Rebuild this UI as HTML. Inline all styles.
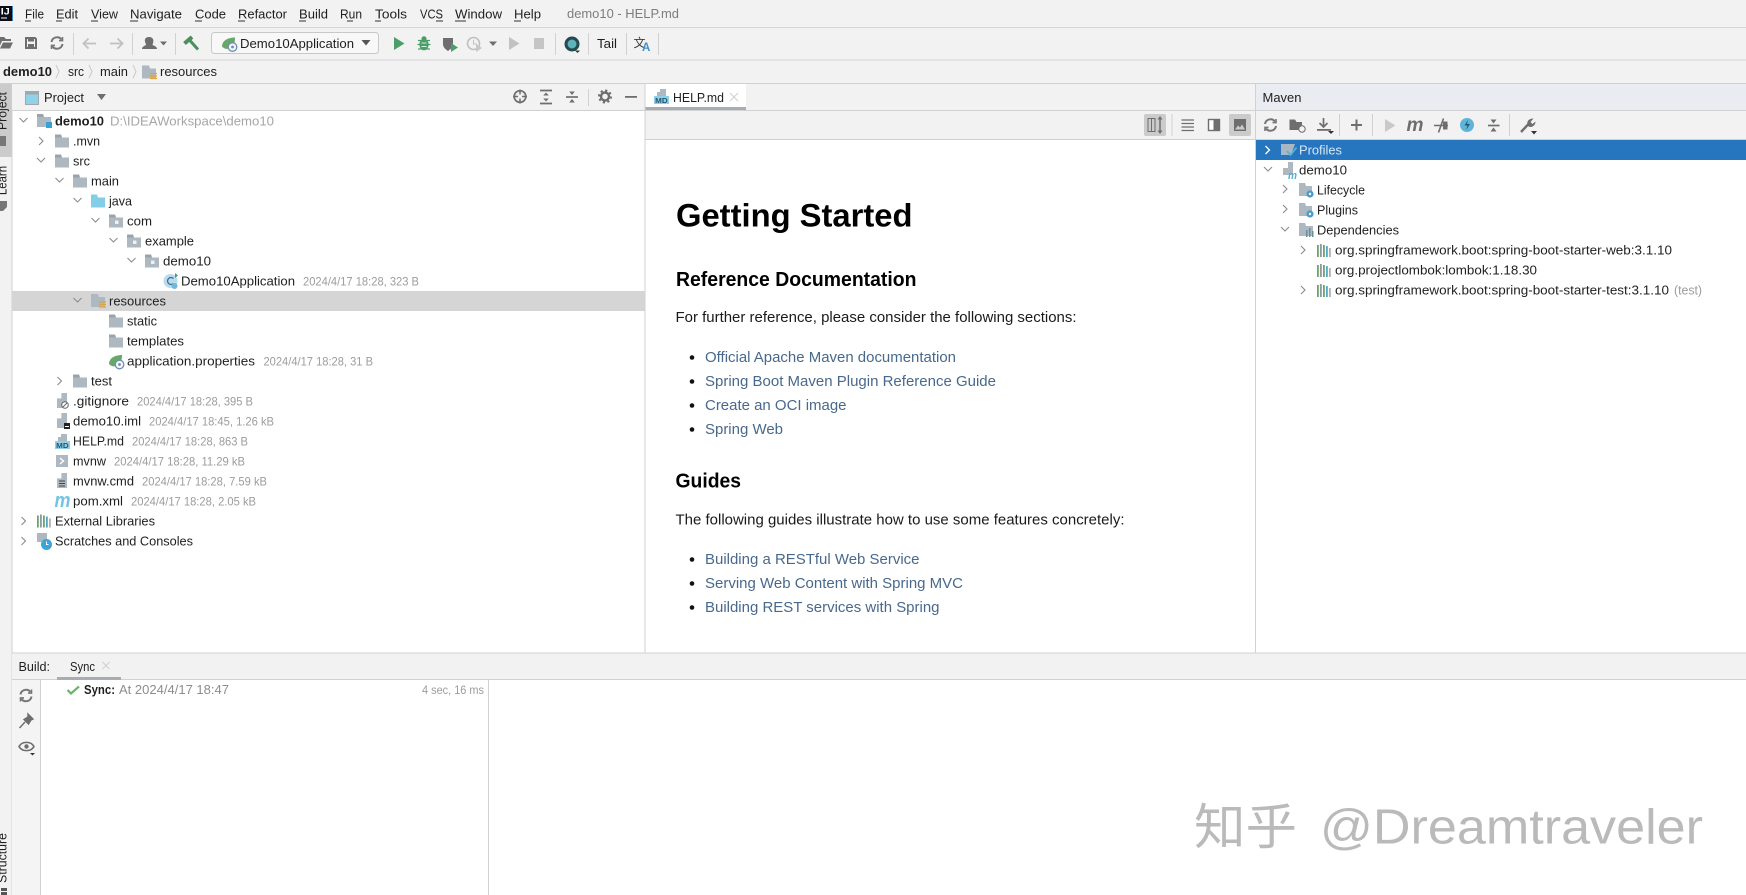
<!DOCTYPE html>
<html lang="en"><head><meta charset="utf-8"><title>demo10 - HELP.md</title>
<style>
html,body{margin:0;padding:0;background:#fff;width:1746px;height:895px;overflow:hidden}
svg{display:block}
text{font-family:"Liberation Sans","Noto Sans CJK SC",sans-serif;font-size:13px;fill:#1f1f1f;white-space:pre}
.g{fill:#9c9c9c;font-size:12px}
.h1{font-size:32px;font-weight:700;fill:#000}
.h2{font-size:20px;font-weight:700;fill:#000}
.p{font-size:14.5px;fill:#1a1a1a}
.a{font-size:14.5px;fill:#48698c}
.m{fill:#1e1e1e;font-size:13px}
.wm{font-size:49px;fill:#bababa}
</style></head><body>
<svg width="1746" height="895" viewBox="0 0 1746 895" xmlns="http://www.w3.org/2000/svg">
<defs>
<path id="cr" d="M-2-4L2 0L-2 4" fill="none" stroke="#8c8c8c" stroke-width="1.100"/>
<path id="cd" d="M-4-2L0 2L4-2" fill="none" stroke="#8c8c8c" stroke-width="1.100"/>
<g id="f"><path d="M0 0H6L7 3H14V13H0Z" fill="#aeb8c0"/><path d="M0 0H6L7 3H0Z" fill="#98a3ab"/></g>
<g id="pk"><use href="#f"/><rect x="6" y="6" width="3.5" height="3.5" fill="#eef1f3"/></g>
<g id="j"><path d="M0 0H6L7 3H14V13H0Z" fill="#84cde9"/></g>
<g id="res"><path d="M0 0H7L8 3H14V13H0Z" fill="#aeb8c0"/><path d="M8 8h7M8 10.5h7M8 13h7" stroke="#e0a33e" stroke-width="1.3"/></g>
<g id="file"><path d="M4 0H10V15H0V5H4Z" fill="#aeb8c0"/><path d="M4 0V5H0" fill="none" stroke="#fff" stroke-width=".8"/></g>
<g id="sp"><path d="M0 10C0 4 6 1 13 1C13 6 12 10 7 12C4 13 2 12 0 10Z" fill="#66a868"/><circle cx="10.5" cy="10.5" r="4.3" fill="#f4f7fa" stroke="#6c8fae" stroke-width="1.3"/><circle cx="10.5" cy="10.5" r="1.4" fill="#6c8fae"/></g>
<g id="lib"><rect x="0" y="1" width="1.8" height="12" fill="#6ca56c"/><rect x="3" y="0" width="1.8" height="13" fill="#8d9aa0"/><rect x="6" y="1" width="1.8" height="12" fill="#6ca56c"/><rect x="9" y="2" width="1.8" height="11" fill="#5aa7c5"/><rect x="12" y="4" width="1.8" height="9" fill="#a9b2b8"/></g>
<g id="mavf"><path d="M0 0H6L7 3H13V13H0Z" fill="#aeb8c0"/><circle cx="11" cy="11" r="3.6" fill="#4a9cc9"/><circle cx="11" cy="11" r="1.2" fill="#fff"/></g>
<g id="sync" fill="none" stroke="#767676" stroke-width="2"><path d="M-5.5 -1A5.6 5.6 0 0 1 4.5 -3.5"/><path d="M5.5 1A5.6 5.6 0 0 1 -4.5 3.5"/><path d="M5.5-6V-2.4H2" stroke-width="1.6"/><path d="M-5.5 6V2.4H-2" stroke-width="1.6"/></g>
<g id="md"><path d="M6 0H12V7H6Z" fill="#aeb8c0"/><path d="M3 3H6V7H3Z" fill="#aeb8c0"/><rect x="0" y="7" width="15" height="8" fill="#8fcfe7"/><text x="1.2" y="14" style="font-size:7px;font-weight:700;fill:#22586f" textLength="12.5" lengthAdjust="spacingAndGlyphs">MD</text></g>
</defs>

<rect width="1746" height="895" fill="#fff"/>
<!-- chrome -->
<rect width="1746" height="83" fill="#f2f2f2"/>
<rect y="27" width="1746" height="1" fill="#d6d6d6"/>
<rect y="59.500" width="1746" height="1" fill="#d1d1d1"/>
<rect y="83" width="1746" height="1" fill="#d1d1d1"/>

<!-- menu -->
<rect x="0" y="6" width="12.500" height="15" fill="#0b0d18"/><rect x="12" y="6" width="1" height="15" fill="#3f83bf"/>
<text x="0.800" y="14.500" style="font-size:9px;font-weight:700;fill:#fff" textLength="9" lengthAdjust="spacingAndGlyphs">IJ</text>
<rect x="1" y="17.500" width="6" height="1" fill="#fff"/>
<g class="menu">
<text class="m" x="25" y="18.500" textLength="19" lengthAdjust="spacingAndGlyphs">File</text>
<text class="m" x="56" y="18.500" textLength="22" lengthAdjust="spacingAndGlyphs">Edit</text>
<text class="m" x="91" y="18.500" textLength="27" lengthAdjust="spacingAndGlyphs">View</text>
<text class="m" x="130" y="18.500" textLength="52" lengthAdjust="spacingAndGlyphs">Navigate</text>
<text class="m" x="195" y="18.500" textLength="31" lengthAdjust="spacingAndGlyphs">Code</text>
<text class="m" x="238" y="18.500" textLength="49" lengthAdjust="spacingAndGlyphs">Refactor</text>
<text class="m" x="299" y="18.500" textLength="29" lengthAdjust="spacingAndGlyphs">Build</text>
<text class="m" x="340" y="18.500" textLength="22" lengthAdjust="spacingAndGlyphs">Run</text>
<text class="m" x="375" y="18.500" textLength="32" lengthAdjust="spacingAndGlyphs">Tools</text>
<text class="m" x="420" y="18.500" textLength="23" lengthAdjust="spacingAndGlyphs">VCS</text>
<text class="m" x="455" y="18.500" textLength="47" lengthAdjust="spacingAndGlyphs">Window</text>
<text class="m" x="514" y="18.500" textLength="27" lengthAdjust="spacingAndGlyphs">Help</text>
</g>
<g fill="#333"><rect x="25" y="20.500" width="6" height="1"/><rect x="56" y="20.500" width="6" height="1"/><rect x="91" y="20.500" width="7" height="1"/><rect x="130" y="20.500" width="8" height="1"/><rect x="195" y="20.500" width="7" height="1"/><rect x="238" y="20.500" width="7" height="1"/><rect x="299" y="20.500" width="7" height="1"/><rect x="347" y="20.500" width="6" height="1"/><rect x="375" y="20.500" width="6" height="1"/><rect x="436" y="20.500" width="7" height="1"/><rect x="455" y="20.500" width="11" height="1"/><rect x="514" y="20.500" width="7" height="1"/></g>
<text x="567" y="18" style="fill:#7d7d7d" textLength="112" lengthAdjust="spacingAndGlyphs">demo10 - HELP.md</text>

<!-- toolbar -->
<path d="M-2 37h6l2 2h5v2H2l-3 7H-2z" fill="#6e6e6e"/><path d="M3 42.500h10L10 48.500H0z" fill="#6e6e6e"/>
<path d="M26 38H35L36 39V48H26Z" fill="none" stroke="#6e6e6e" stroke-width="2"/><rect x="28" y="38" width="6" height="3.500" fill="#6e6e6e"/><rect x="28" y="44" width="6" height="4" fill="#6e6e6e"/>
<use href="#sync" x="57" y="43"/>
<rect x="73" y="33" width="1" height="22" fill="#d1d1d1"/>
<path d="M83.500 43.500H96M88.500 38.500L83.500 43.500L88.500 48.500" fill="none" stroke="#c0c0c0" stroke-width="1.800"/>
<path d="M110 43.500H122.500M117.500 38.500L122.500 43.500L117.500 48.500" fill="none" stroke="#c0c0c0" stroke-width="1.800"/>
<rect x="132" y="33" width="1" height="22" fill="#d1d1d1"/>
<path d="M149 37C153 37 154 40 153 43L152.500 45C155 46 157 47 157 49H142C142 47 144 46 146 45L145.500 43C144 40 145 37 149 37Z" fill="#6e6e6e"/>
<path d="M160 41.500h7l-3.500 4z" fill="#6e6e6e"/>
<rect x="175" y="33" width="1" height="22" fill="#d1d1d1"/>
<path d="M184.500 43.500L192 37" stroke="#4b8f5f" stroke-width="4" fill="none"/><path d="M189.500 40L198 49.500" stroke="#4b8f5f" stroke-width="3" fill="none"/>
<rect x="211.500" y="32.500" width="167" height="21" rx="3" fill="#f8f8f8" stroke="#c8c8c8"/>
<use href="#sp" x="222" y="36.500"/>
<text x="240" y="48" style="font-size:13px" textLength="114" lengthAdjust="spacingAndGlyphs">Demo10Application</text>
<path d="M361.500 40h9l-4.500 5.500z" fill="#555"/>
<path d="M394 37L404.500 43.500L394 50Z" fill="#4c9e68"/>
<path d="M418 40.500H430M417.500 44.500H430.500M418 49H430" stroke="#4c9e68" stroke-width="1.300"/>
<g fill="#4c9e68"><ellipse cx="424" cy="44.500" rx="4.700" ry="5.800"/><circle cx="424" cy="38.800" r="2.500"/></g>
<path d="M421.500 43H426.500M421.500 46.500H426.500" stroke="#d7e8dc" stroke-width="1"/>
<path d="M443 38H453V47L448 51C445 49 443 47 443 44Z" fill="#6e6e6e"/><path d="M451 43L458 47.500L451 52Z" fill="#4c9e68"/>
<circle cx="473.500" cy="43.500" r="6" fill="none" stroke="#c0c0c0" stroke-width="1.600"/><path d="M473.500 40V44H477" fill="none" stroke="#c0c0c0"/><path d="M476 44L482 48L476 52Z" fill="#c7c7c7"/>
<path d="M489 41.500h8l-4 4.500z" fill="#6e6e6e"/>
<path d="M509 37L519.500 43.500L509 50Z" fill="#c2c2c2"/>
<rect x="534" y="38" width="10" height="11" fill="#c5c5c5"/>
<rect x="555" y="33" width="1" height="22" fill="#d1d1d1"/>
<circle cx="572" cy="44" r="6" fill="#5fb3bc" stroke="#24494e" stroke-width="3"/><path d="M575 50.500h5l-2.500 2.500z" fill="#333"/>
<rect x="588" y="33" width="1" height="22" fill="#d1d1d1"/>
<text x="597" y="48" style="font-size:13px" textLength="20" lengthAdjust="spacingAndGlyphs">Tail</text>
<rect x="626" y="33" width="1" height="22" fill="#d1d1d1"/>
<text x="633.500" y="47" style="font-size:12px;fill:#3c3c3c">文</text>
<text x="642" y="51" style="font-size:11.500px;font-weight:700;fill:#3f8fd0">A</text>
<rect x="658" y="33" width="1" height="22" fill="#d1d1d1"/>

<!-- breadcrumb -->
<text x="3" y="76" style="font-weight:700;font-size:13px" textLength="49" lengthAdjust="spacingAndGlyphs">demo10</text>
<path d="M56 65l3 6.500l-3 6.500" fill="none" stroke="#c9c9c9"/>
<text x="68" y="76" textLength="16" lengthAdjust="spacingAndGlyphs">src</text>
<path d="M89 65l3 6.500l-3 6.500" fill="none" stroke="#c9c9c9"/>
<text x="100" y="76" textLength="28" lengthAdjust="spacingAndGlyphs">main</text>
<path d="M133 65l3 6.500l-3 6.500" fill="none" stroke="#c9c9c9"/>
<use href="#res" x="142" y="65.500"/>
<text x="160" y="76" textLength="57" lengthAdjust="spacingAndGlyphs">resources</text>

<!-- left strip -->
<rect y="84" width="11.500" height="811" fill="#f2f2f2"/>
<rect y="84" width="11.500" height="73" fill="#cbcbcb"/>
<rect x="11.500" y="84" width="1" height="811" fill="#d1d1d1"/>
<text transform="translate(6.500,130) rotate(-90)" textLength="38" lengthAdjust="spacingAndGlyphs" style="font-size:13px">Project</text>
<path d="M0 136H6V146H0Z" fill="#777"/>
<text transform="translate(6.500,195) rotate(-90)" textLength="29" lengthAdjust="spacingAndGlyphs" style="font-size:13px">Learn</text>
<path d="M0 201H7V207L3 211H0Z" fill="#777"/>
<text transform="translate(6.500,883) rotate(-90)" textLength="50" lengthAdjust="spacingAndGlyphs" style="font-size:13px">Structure</text>
<path d="M1 888H7V891H1ZM1 892H7V895H1Z" fill="#555"/>

<!-- project header -->
<rect x="12" y="84" width="633" height="26" fill="#f2f2f2"/>
<rect x="12" y="110" width="633" height="1" fill="#d1d1d1"/>
<rect x="25.500" y="91.500" width="13" height="13" fill="#8fd2ea" stroke="#a0a8ae"/><rect x="25.500" y="91.500" width="13" height="3" fill="#a0a8ae"/>
<text x="44" y="102" textLength="40" lengthAdjust="spacingAndGlyphs">Project</text>
<path d="M97 94h9l-4.500 6z" fill="#6e6e6e"/>
<circle cx="520" cy="96.500" r="5.800" fill="none" stroke="#6e6e6e" stroke-width="1.700"/><path d="M520 89.500v5M520 98.500v5M513 96.500h5M522 96.500h5" stroke="#6e6e6e" stroke-width="1.500"/>
<path d="M540 90.500h12M540 103.500h12" stroke="#6e6e6e" stroke-width="1.700"/><path d="M546 92.500l-2.800 3h5.600zM546 101.500l-2.800-3h5.600z" fill="#6e6e6e"/>
<path d="M566 97h12" stroke="#6e6e6e" stroke-width="1.700"/><path d="M572 95l-2.800-3.500h5.600zM572 99l-2.800 3.500h5.600z" fill="#6e6e6e"/>
<rect x="588" y="89" width="1" height="17" fill="#d1d1d1"/>
<circle cx="605" cy="96.500" r="4" fill="none" stroke="#6e6e6e" stroke-width="2.400"/><circle cx="605" cy="96.500" r="6" fill="none" stroke="#6e6e6e" stroke-width="2" stroke-dasharray="2.200 2.500"/>
<rect x="625" y="96" width="12" height="1.800" fill="#6e6e6e"/>

<!-- project tree -->
<rect x="12" y="291" width="633" height="20" fill="#d5d5d5"/>
<use href="#cd" x="23.500" y="120"/>
<use href="#f" x="37" y="114"/><rect x="46" y="122" width="6" height="6" fill="#36a3d4"/>
<text x="55" y="125.500" style="font-weight:700" textLength="49" lengthAdjust="spacingAndGlyphs">demo10</text>
<text class="g" x="110" y="125.500" style="font-size:12.500px;fill:#a6a6a6" textLength="164" lengthAdjust="spacingAndGlyphs">D:\IDEAWorkspace\demo10</text>

<use href="#cr" x="41" y="141"/><use href="#f" x="55" y="134.500"/>
<text x="73" y="145.500" textLength="27" lengthAdjust="spacingAndGlyphs">.mvn</text>
<use href="#cd" x="41" y="160"/><use href="#f" x="55" y="154.500"/>
<text x="73" y="165.500" textLength="17" lengthAdjust="spacingAndGlyphs">src</text>
<use href="#cd" x="59.500" y="180"/><use href="#f" x="73" y="174.500"/>
<text x="91" y="185.500" textLength="28" lengthAdjust="spacingAndGlyphs">main</text>
<use href="#cd" x="77.500" y="200"/><use href="#j" x="91" y="194.500"/>
<text x="109" y="205.500" textLength="23" lengthAdjust="spacingAndGlyphs">java</text>
<use href="#cd" x="95.500" y="220"/><use href="#pk" x="109" y="214.500"/>
<text x="127" y="225.500" textLength="25" lengthAdjust="spacingAndGlyphs">com</text>
<use href="#cd" x="113.500" y="240"/><use href="#pk" x="127" y="234.500"/>
<text x="145" y="245.500" textLength="49" lengthAdjust="spacingAndGlyphs">example</text>
<use href="#cd" x="131.500" y="260"/><use href="#pk" x="145" y="254.500"/>
<text x="163" y="265.500" textLength="48" lengthAdjust="spacingAndGlyphs">demo10</text>
<circle cx="170.500" cy="281" r="7" fill="#b8dcee"/><path d="M173.500 278.500A3.500 3.500 0 1 0 173.500 283.500" fill="none" stroke="#3f6f8c" stroke-width="1.300"/><path d="M175 273l3 2.500-3 2.500z" fill="#4c9e68"/><circle cx="174.500" cy="286" r="3" fill="#6fb7dc"/>
<text x="181" y="285.500" textLength="114" lengthAdjust="spacingAndGlyphs">Demo10Application</text>
<text class="g" x="303" y="285.500" textLength="116" lengthAdjust="spacingAndGlyphs">2024/4/17 18:28, 323 B</text>

<use href="#cd" x="77.500" y="300"/><use href="#res" x="91" y="294"/>
<text x="109" y="305.500" textLength="57" lengthAdjust="spacingAndGlyphs">resources</text>
<use href="#f" x="109" y="314.500"/><text x="127" y="325.500" textLength="30" lengthAdjust="spacingAndGlyphs">static</text>
<use href="#f" x="109" y="334.500"/><text x="127" y="345.500" textLength="57" lengthAdjust="spacingAndGlyphs">templates</text>
<use href="#sp" x="109" y="354"/><text x="127" y="365.500" textLength="128" lengthAdjust="spacingAndGlyphs">application.properties</text>
<text class="g" x="263.500" y="365.500" textLength="109.500" lengthAdjust="spacingAndGlyphs">2024/4/17 18:28, 31 B</text>
<use href="#cr" x="59.500" y="381"/><use href="#f" x="73" y="374.500"/>
<text x="91" y="385.500" textLength="21" lengthAdjust="spacingAndGlyphs">test</text>

<use href="#file" x="57" y="393"/><circle cx="65" cy="405" r="3.300" fill="#fff" stroke="#666"/><path d="M63 407l4-4" stroke="#666"/>
<text x="73" y="405.500" textLength="56" lengthAdjust="spacingAndGlyphs">.gitignore</text>
<text class="g" x="137" y="405.500" textLength="116" lengthAdjust="spacingAndGlyphs">2024/4/17 18:28, 395 B</text>
<use href="#file" x="57" y="413"/><rect x="64" y="423" width="6" height="6" fill="#222"/><rect x="65" y="426" width="4" height="1" fill="#fff"/>
<text x="73" y="425.500" textLength="68" lengthAdjust="spacingAndGlyphs">demo10.iml</text>
<text class="g" x="149" y="425.500" textLength="125" lengthAdjust="spacingAndGlyphs">2024/4/17 18:45, 1.26 kB</text>
<use href="#md" x="55" y="434"/>
<text x="73" y="445.500" textLength="51" lengthAdjust="spacingAndGlyphs">HELP.md</text>
<text class="g" x="132" y="445.500" textLength="116" lengthAdjust="spacingAndGlyphs">2024/4/17 18:28, 863 B</text>
<rect x="56" y="455" width="12" height="12" fill="#aeb8c0"/><path d="M60 458l3.500 3-3.500 3" fill="none" stroke="#fff" stroke-width="1.400"/>
<text x="73" y="465.500" textLength="33" lengthAdjust="spacingAndGlyphs">mvnw</text>
<text class="g" x="114" y="465.500" textLength="131" lengthAdjust="spacingAndGlyphs">2024/4/17 18:28, 11.29 kB</text>
<use href="#file" x="57" y="473"/><path d="M59 481h6M59 483.500h6M59 486h6" stroke="#444" stroke-width="1"/>
<text x="73" y="485.500" textLength="61" lengthAdjust="spacingAndGlyphs">mvnw.cmd</text>
<text class="g" x="142" y="485.500" textLength="125" lengthAdjust="spacingAndGlyphs">2024/4/17 18:28, 7.59 kB</text>
<text x="54.500" y="507" style="font-size:20px;font-style:italic;font-weight:700;fill:#72c4e4" textLength="16" lengthAdjust="spacingAndGlyphs">m</text>
<text x="73" y="505.500" textLength="50" lengthAdjust="spacingAndGlyphs">pom.xml</text>
<text class="g" x="131" y="505.500" textLength="125" lengthAdjust="spacingAndGlyphs">2024/4/17 18:28, 2.05 kB</text>
<use href="#cr" x="23.500" y="521"/><use href="#lib" x="37" y="514.500"/>
<text x="55" y="525.500" textLength="100" lengthAdjust="spacingAndGlyphs">External Libraries</text>
<use href="#cr" x="23.500" y="541"/><path d="M37 533h10v9H37Z" fill="#aeb8c0"/><circle cx="46.500" cy="544.500" r="5.500" fill="#3ba4d8"/><path d="M46.500 541.500v3h2" stroke="#fff" fill="none"/>
<text x="55" y="545.500" textLength="138" lengthAdjust="spacingAndGlyphs">Scratches and Consoles</text>

<!-- borders -->
<rect x="644.500" y="84" width="1" height="569" fill="#d1d1d1"/>
<rect x="1255" y="84" width="1" height="569" fill="#d1d1d1"/>

<!-- editor -->
<rect x="645.500" y="84" width="609.500" height="26" fill="#f2f2f2"/>
<rect x="645.500" y="84" width="100.500" height="23" fill="#fff"/>
<rect x="645.500" y="107" width="100.500" height="3" fill="#a8adb3"/>
<use href="#md" x="654" y="89"/>
<text x="673" y="102" textLength="51" lengthAdjust="spacingAndGlyphs">HELP.md</text>
<path d="M730 93l8 8M738 93l-8 8" stroke="#d0d0d0" stroke-width="1.100"/>
<rect x="645.500" y="110" width="609.500" height="29" fill="#f2f2f2"/>
<rect x="645.500" y="110" width="609.500" height="1" fill="#d1d1d1"/>
<rect x="645.500" y="139" width="609.500" height="1" fill="#d1d1d1"/>
<rect x="1144" y="114" width="22" height="22" rx="2" fill="#cbcbcb"/>
<path d="M1148 118.500h7v13h-7zM1151.500 118.500v13" fill="none" stroke="#6e6e6e"/><path d="M1160 117v16" stroke="#6e6e6e" stroke-width="1.500"/><path d="M1160 116l-2.500 3.500h5zM1160 134l-2.500-3.500h5z" fill="#6e6e6e"/>
<rect x="1171.500" y="114" width="1" height="22" fill="#d1d1d1"/>
<path d="M1181.500 120h12.500M1181.500 123.500h12.500M1181.500 127h12.500M1181.500 130.500h12.500" stroke="#6e6e6e" stroke-width="1.300"/>
<rect x="1208.500" y="119.500" width="11" height="11" fill="#fff" stroke="#6e6e6e" stroke-width="1.400"/><rect x="1213.500" y="119.500" width="6" height="11" fill="#6e6e6e"/>
<rect x="1229" y="114" width="22" height="22" rx="2" fill="#cbcbcb"/>
<rect x="1234" y="119" width="12" height="12" fill="#6e6e6e"/><path d="M1235 129.500l3-4 2 2 2-3 3 5z" fill="#cbcbcb"/>

<text class="h1" x="676" y="226.500" textLength="236.500" lengthAdjust="spacingAndGlyphs">Getting Started</text>
<text class="h2" x="676" y="286" textLength="240.500" lengthAdjust="spacingAndGlyphs">Reference Documentation</text>
<text class="p" x="675.500" y="322" textLength="401" lengthAdjust="spacingAndGlyphs">For further reference, please consider the following sections:</text>
<circle cx="692" cy="357.500" r="2.300" fill="#111"/><text class="a" x="705" y="362" textLength="251" lengthAdjust="spacingAndGlyphs">Official Apache Maven documentation</text>
<circle cx="692" cy="381.500" r="2.300" fill="#111"/><text class="a" x="705" y="386" textLength="291" lengthAdjust="spacingAndGlyphs">Spring Boot Maven Plugin Reference Guide</text>
<circle cx="692" cy="405.500" r="2.300" fill="#111"/><text class="a" x="705" y="410" textLength="141.500" lengthAdjust="spacingAndGlyphs">Create an OCI image</text>
<circle cx="692" cy="429.500" r="2.300" fill="#111"/><text class="a" x="705" y="434" textLength="78" lengthAdjust="spacingAndGlyphs">Spring Web</text>
<text class="h2" x="675.500" y="487.500" textLength="65.500" lengthAdjust="spacingAndGlyphs">Guides</text>
<text class="p" x="675.500" y="524.500" textLength="449" lengthAdjust="spacingAndGlyphs">The following guides illustrate how to use some features concretely:</text>
<circle cx="692" cy="559.500" r="2.300" fill="#111"/><text class="a" x="705" y="564" textLength="214.500" lengthAdjust="spacingAndGlyphs">Building a RESTful Web Service</text>
<circle cx="692" cy="583.500" r="2.300" fill="#111"/><text class="a" x="705" y="588" textLength="258" lengthAdjust="spacingAndGlyphs">Serving Web Content with Spring MVC</text>
<circle cx="692" cy="607.500" r="2.300" fill="#111"/><text class="a" x="705" y="612" textLength="234.500" lengthAdjust="spacingAndGlyphs">Building REST services with Spring</text>

<!-- maven -->
<rect x="1256" y="84" width="490" height="26" fill="#e9edf2"/>
<rect x="1256" y="110" width="490" height="29" fill="#f2f2f2"/>
<rect x="1256" y="110" width="490" height="1" fill="#d1d1d1"/>
<rect x="1256" y="139" width="490" height="1" fill="#d1d1d1"/>
<text x="1262.500" y="102" textLength="39" lengthAdjust="spacingAndGlyphs">Maven</text>
<use href="#sync" x="1270.500" y="125"/>
<path d="M1289.500 119.500H1295L1296.500 122H1302V130H1289.500Z" fill="#6e6e6e"/><circle cx="1302" cy="129" r="3.200" fill="#f2f2f2" stroke="#6e6e6e"/>
<path d="M1323.500 118v8.500M1319.500 123l4 4 4-4" fill="none" stroke="#6e6e6e" stroke-width="1.700"/><rect x="1317" y="129" width="14" height="1.800" fill="#6e6e6e"/><path d="M1328 131h6l-3 3z" fill="#333"/>
<rect x="1339" y="114" width="1" height="22" fill="#d1d1d1"/>
<path d="M1351 125h11M1356.500 119.500v11" stroke="#6e6e6e" stroke-width="2"/>
<rect x="1372" y="114" width="1" height="22" fill="#d1d1d1"/>
<path d="M1385 119L1395.500 125.500L1385 132Z" fill="#c9c9c9"/>
<text x="1406.500" y="131" style="font-size:19px;font-style:italic;font-weight:700;fill:#6e6e6e" textLength="17" lengthAdjust="spacingAndGlyphs">m</text>
<path d="M1434 125.500h14M1443.500 118.500L1438.500 132.500" stroke="#6e6e6e" stroke-width="1.600"/><rect x="1443" y="121.500" width="4.500" height="8" fill="#6e6e6e"/>
<circle cx="1467" cy="125" r="7" fill="#5fb4da"/><path d="M1468 120l-3.500 5.500h3l-1.500 4.500 4-6h-3z" fill="#27536c"/>
<path d="M1488 125.500h11.500" stroke="#6e6e6e" stroke-width="1.700"/><path d="M1493.500 123.500l-3-4h6zM1493.500 127.500l-3 4h6z" fill="#6e6e6e"/>
<rect x="1509" y="114" width="1" height="22" fill="#d1d1d1"/>
<path d="M1521 132L1529 123.500" stroke="#6e6e6e" stroke-width="2.400"/><path d="M1527.500 125C1526.500 121 1529 118.500 1533.500 118.500L1530.500 122L1532.500 124L1535.500 121.500C1535.500 125.500 1532 128 1528.500 126.500Z" fill="#6e6e6e"/><path d="M1531 131h6l-3 3.500z" fill="#333"/>

<rect x="1256" y="140" width="490" height="20" fill="#2675bf"/>
<path d="M1265.500 146L1269.500 150L1265.500 154" fill="none" stroke="#fff" stroke-width="1.300"/>
<path d="M1281 144H1295L1291 155H1281Z" fill="#a9b6c4"/><path d="M1287 151l3.500 4 6-7.500" fill="none" stroke="#4fb5e4" stroke-width="1.800"/>
<text x="1299" y="154.500" style="fill:#d5e7f6" textLength="43" lengthAdjust="spacingAndGlyphs">Profiles</text>
<use href="#cd" x="1268" y="169"/>
<path d="M1288 162H1293V175H1283V168H1288Z" fill="#aeb8c0"/><text x="1288" y="179" style="font-size:11px;font-style:italic;font-weight:700;fill:#4fb0d8" textLength="9" lengthAdjust="spacingAndGlyphs">m</text>
<text x="1299" y="174.500" textLength="48" lengthAdjust="spacingAndGlyphs">demo10</text>
<use href="#cr" x="1285" y="189"/><use href="#mavf" x="1299" y="183"/>
<text x="1317" y="194.500" textLength="48" lengthAdjust="spacingAndGlyphs">Lifecycle</text>
<use href="#cr" x="1285" y="209"/><use href="#mavf" x="1299" y="203"/>
<text x="1317" y="214.500" textLength="41" lengthAdjust="spacingAndGlyphs">Plugins</text>
<use href="#cd" x="1285" y="229"/>
<path d="M1299 223H1305L1306 226H1313V236H1299Z" fill="#aeb8c0"/><g fill="#6a8f9c"><rect x="1306" y="230" width="1.500" height="7"/><rect x="1309" y="228" width="1.500" height="9"/><rect x="1312" y="231" width="1.500" height="6"/></g>
<text x="1317" y="234.500" textLength="82" lengthAdjust="spacingAndGlyphs">Dependencies</text>
<use href="#cr" x="1303" y="250"/><use href="#lib" x="1317" y="244"/>
<text x="1335" y="254.500" textLength="337" lengthAdjust="spacingAndGlyphs">org.springframework.boot:spring-boot-starter-web:3.1.10</text>
<use href="#lib" x="1317" y="264"/>
<text x="1335" y="274.500" textLength="202" lengthAdjust="spacingAndGlyphs">org.projectlombok:lombok:1.18.30</text>
<use href="#cr" x="1303" y="290"/><use href="#lib" x="1317" y="284"/>
<text x="1335" y="294.500" textLength="334" lengthAdjust="spacingAndGlyphs">org.springframework.boot:spring-boot-starter-test:3.1.10</text>
<text class="g" x="1674" y="294.500" style="font-size:13px" textLength="28" lengthAdjust="spacingAndGlyphs">(test)</text>

<!-- build panel -->
<rect x="12" y="652.500" width="1734" height="1" fill="#d1d1d1"/>
<rect x="12" y="653.500" width="1734" height="25.500" fill="#f2f2f2"/>
<rect x="12" y="679" width="1734" height="1" fill="#d1d1d1"/>
<text x="18.500" y="671" textLength="31.500" lengthAdjust="spacingAndGlyphs">Build:</text>
<text x="70" y="671" textLength="25" lengthAdjust="spacingAndGlyphs">Sync</text>
<path d="M102.500 662l7 7M109.500 662l-7 7" stroke="#d0d0d0" stroke-width="1.100"/>
<rect x="57" y="677" width="64" height="3" fill="#a8adb3"/>
<rect x="12" y="680" width="28" height="215" fill="#f4f4f4"/>
<rect x="40" y="680" width="1" height="215" fill="#d1d1d1"/>
<rect x="488" y="680" width="1" height="215" fill="#d1d1d1"/>
<use href="#sync" x="26" y="695.500"/>
<path d="M28 714L33 719L31 720L28.500 724L24 719.500L28 717ZM25 722L19.500 728" fill="#6e6e6e" stroke="#6e6e6e" stroke-width="1.400"/>
<path d="M19 746.500C22 741 31 741 34 746.500C31 752 22 752 19 746.500Z" fill="none" stroke="#6e6e6e" stroke-width="1.600"/><circle cx="26.500" cy="746.500" r="2.200" fill="#6e6e6e"/><path d="M30 753h5l-2.500 2.500z" fill="#333"/>
<path d="M67.500 690l3.500 3.500 8-7" fill="none" stroke="#6db46b" stroke-width="2.200"/>
<text x="84" y="694" style="font-weight:700" textLength="31" lengthAdjust="spacingAndGlyphs">Sync:</text>
<text x="119" y="694" style="fill:#8d8d8d" textLength="110" lengthAdjust="spacingAndGlyphs">At 2024/4/17 18:47</text>
<text x="422" y="694" class="g" textLength="62" lengthAdjust="spacingAndGlyphs">4 sec, 16 ms</text>

<!-- watermark -->
<text class="wm" x="1194" y="844" textLength="103" lengthAdjust="spacingAndGlyphs">知乎</text>
<text class="wm" x="1320" y="843.500" textLength="383" lengthAdjust="spacingAndGlyphs">@Dreamtraveler</text>
</svg>
</body></html>
